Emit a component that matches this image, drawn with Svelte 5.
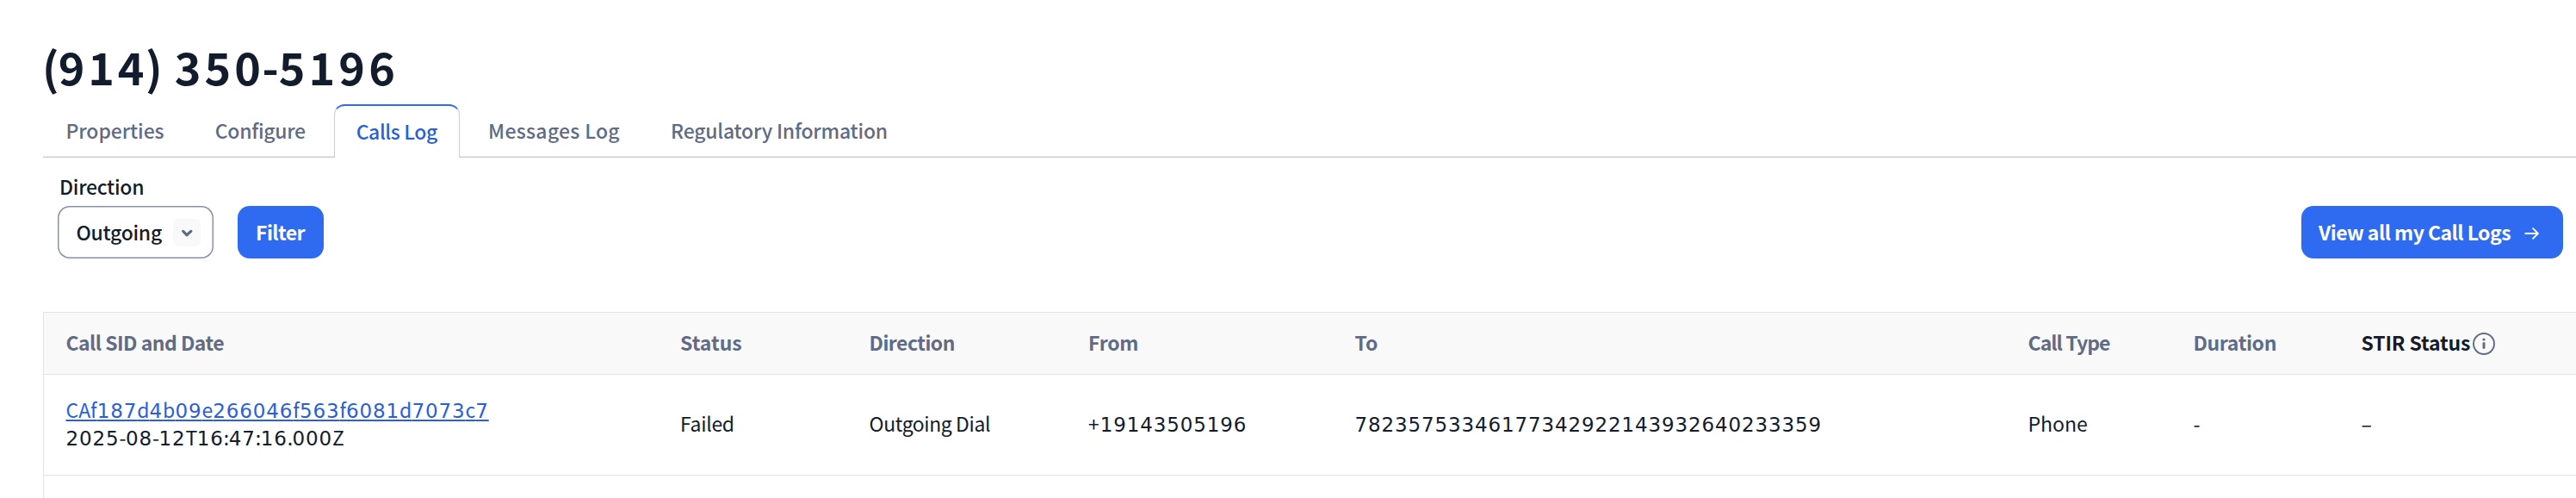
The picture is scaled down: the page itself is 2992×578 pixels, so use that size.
<script>
  const tabs = [
    { label: 'Properties', width: 167, spacing: -0.08 },
    { label: 'Configure', width: 170.5, spacing: -0.3 },
    { label: 'Calls Log', width: 146.5, spacing: -0.42, active: true },
    { label: 'Messages Log', width: 219, spacing: 0.28 },
    { label: 'Regulatory Information', width: 304, spacing: -0.22 },
  ];
  const columns = [
    { label: 'Call SID and Date', spacing: -0.53 },
    { label: 'Status', spacing: 0 },
    { label: 'Direction', spacing: -0.53 },
    { label: 'From', spacing: -0.25 },
    { label: 'To', spacing: 0 },
    { label: 'Call Type', spacing: -0.95 },
    { label: 'Duration', spacing: -0.35 },
    { label: 'STIR Status', spacing: -0.15, info: true },
  ];
  const cells = [
    { text: 'Failed', spacing: -0.3 },
    { text: 'Outgoing Dial', spacing: -0.43 },
    { text: '+19143505196', spacing: 1 },
    { text: '78235753346177342922143932640233359', spacing: 0 },
    { text: 'Phone', spacing: 0 },
    { text: '-', spacing: 0 },
    { text: '–', spacing: 0 },
  ];
  // The heading's digits are tracked wider than its punctuation.
  const title = [
    ['(', -1], ['91', 3.9], ['4', 1.5], [') ', 1.1],
    ['35', 4.1], ['0', 1.6], ['-', 0], ['519', 4.1], ['6', 0],
  ];
  const runs = (text) => text.match(/\d+|\D+/g);
</script>

{#snippet mixed(text)}{#each runs(text) as run}<span class:digits={/\d/.test(run)}>{run}</span>{/each}{/snippet}

<main>
  <h1>{#each title as [text, spacing]}<span style="letter-spacing:{spacing}px">{text}</span>{/each}</h1>

  <nav>
    {#each tabs as tab}
      <a class="tab" class:active={tab.active} style="width:{tab.width}px;letter-spacing:{tab.spacing}px">{tab.label}</a>
    {/each}
    <span class="rule"></span>
  </nav>

  <section class="filters">
    <div class="field">
      <span class="label">Direction</span>
      <div class="controls">
        <div class="select">
          <span>Outgoing</span>
          <i class="chevron">
            <svg width="32" height="32" viewBox="0 0 32 32" fill="none" stroke="#606b85" stroke-width="3.2" stroke-linecap="round" stroke-linejoin="round"><path d="M11.7 14.4 16 18.8l4.9-4.4" /></svg>
          </i>
        </div>
        <button class="filter">Filter</button>
      </div>
    </div>
    <button class="view">
      <span>View all my Call Logs</span>
      <svg width="18" height="16" viewBox="0 0 18 16" fill="none" stroke="#fff" stroke-width="1.8" stroke-linecap="round" stroke-linejoin="round"><path d="M1.2 8h14.4M10 2.2 15.9 8 10 13.8" /></svg>
    </button>
  </section>

  <div class="table">
    <div class="row head">
      {#each columns as col}
        <div class="cell" class:dark={col.info}>
          <span style="letter-spacing:{col.spacing}px">{col.label}</span>
          {#if col.info}
            <svg class="info" width="28" height="28" viewBox="0 0 28 28" fill="none" stroke="#606b85"><circle cx="14" cy="14" r="12" stroke-width="1.9" /><path d="M14 13.6v5" stroke-width="3" stroke-linecap="round" /><circle cx="14" cy="9" r="1.6" fill="#606b85" stroke="none" /></svg>
          {/if}
        </div>
      {/each}
    </div>
    <div class="row body">
      <div class="cell stack">
        <a class="sid">{@render mixed('CAf187d4b09e266046f563f6081d7073c7')}</a>
        <span class="date">{@render mixed('2025-08-12T16:47:16.000Z')}</span>
      </div>
      {#each cells as cell}
        <div class="cell" style="letter-spacing:{cell.spacing}px">{@render mixed(cell.text)}</div>
      {/each}
    </div>
    <div class="next"></div>
  </div>
</main>

<style>
  :global(body) { background: #fff; }
  main {
    box-sizing: border-box;
    height: 578px;
    padding: 41px 0 0 50px;
    overflow: hidden;
    color: #121c2d;
    font: 400 23px/32px 'Noto Sans CJK SC', 'Noto Sans', sans-serif;
    white-space: nowrap;
  }
  h1 {
    margin: 0 0 8px -1px;
    font-size: 52px;
    line-height: 72px;
    font-weight: 700;
  }
  nav { display: flex; height: 62px; font-weight: 500; color: #606b85; }
  .tab {
    box-sizing: border-box;
    text-align: center;
    line-height: 60px;
    border-bottom: 1px solid #cacdd8;
    box-shadow: inset 0 -1px #e6e8ee;
  }
  .tab.active {
    line-height: 58px;
    color: #2a5fd8;
    border: 1px solid #cacdd8;
    border-top: 2px solid #2e6bf0;
    border-bottom: 0;
    border-radius: 12px 12px 0 0;
    box-shadow: none;
  }
  .rule { flex: 1; border-bottom: 1px solid #cacdd8; box-shadow: inset 0 -1px #e6e8ee; }
  .filters {
    box-sizing: border-box;
    display: flex;
    justify-content: space-between;
    align-items: flex-end;
    height: 117px;
    padding: 0 15px 0 17px;
    font-weight: 500;
  }
  .field { display: flex; flex-direction: column; }
  .label { padding-left: 2px; height: 39px; letter-spacing: -0.28px; }
  .controls { display: flex; gap: 28px; }
  .select {
    box-sizing: border-box;
    display: flex;
    align-items: center;
    justify-content: space-between;
    width: 181px;
    height: 61px;
    padding: 0 15px 2px 21.5px;
    box-shadow: inset 0 0 0 1.5px #8891aa;
    border-radius: 14px;
    letter-spacing: -0.3px;
  }
  .chevron { height: 32px; border-radius: 6px; background: #f9f9fa; margin-top: 3px; }
  .chevron svg { display: block; }
  button {
    display: flex;
    align-items: center;
    height: 61px;
    padding: 0 0 2px;
    border: 0;
    border-radius: 14px;
    background: #2e6bf0;
    color: #fff;
    font: inherit;
    font-weight: 700;
  }
  .filter { width: 100px; padding-left: 21px; letter-spacing: -0.57px; }
  .view { width: 304px; padding-left: 20px; gap: 16px; letter-spacing: -0.54px; }
  .view svg { margin-top: 4px; }
  .table {
    margin-top: 62px;
    border: 1px solid #e1e3ea;
    border-right: 0;
    border-bottom: 0;
  }
  .row {
    display: grid;
    grid-template-columns: 713.5px 219.5px 254.5px 309.5px 782px 192px 195px 1fr;
    padding-left: 25.5px;
    border-bottom: 1px solid #e1e3ea;
  }
  .head {
    height: 68px;
    padding-bottom: 3px;
    align-items: center;
    background: #f9f9fa;
    color: #606b85;
    font-weight: 700;
  }
  .dark { display: flex; align-items: center; gap: 1.5px; color: #121c2d; }
  .info { margin-top: 3px; }
  .body { height: 112px; padding-bottom: 4px; align-items: center; }
  .stack { display: flex; flex-direction: column; align-items: flex-start; }
  .digits {
    font-family: 'DejaVu Sans', sans-serif;
    font-size: 23px;
    line-height: 0;
    letter-spacing: 0.87px;
  }
  .sid {
    color: #2a5fd8;
    letter-spacing: 0.1px;
    text-decoration: underline;
    text-decoration-thickness: 2px;
    text-underline-offset: 2px;
    text-decoration-skip-ink: none;
  }
  .date { letter-spacing: -0.5px; }
  .next { height: 40px; }
</style>
